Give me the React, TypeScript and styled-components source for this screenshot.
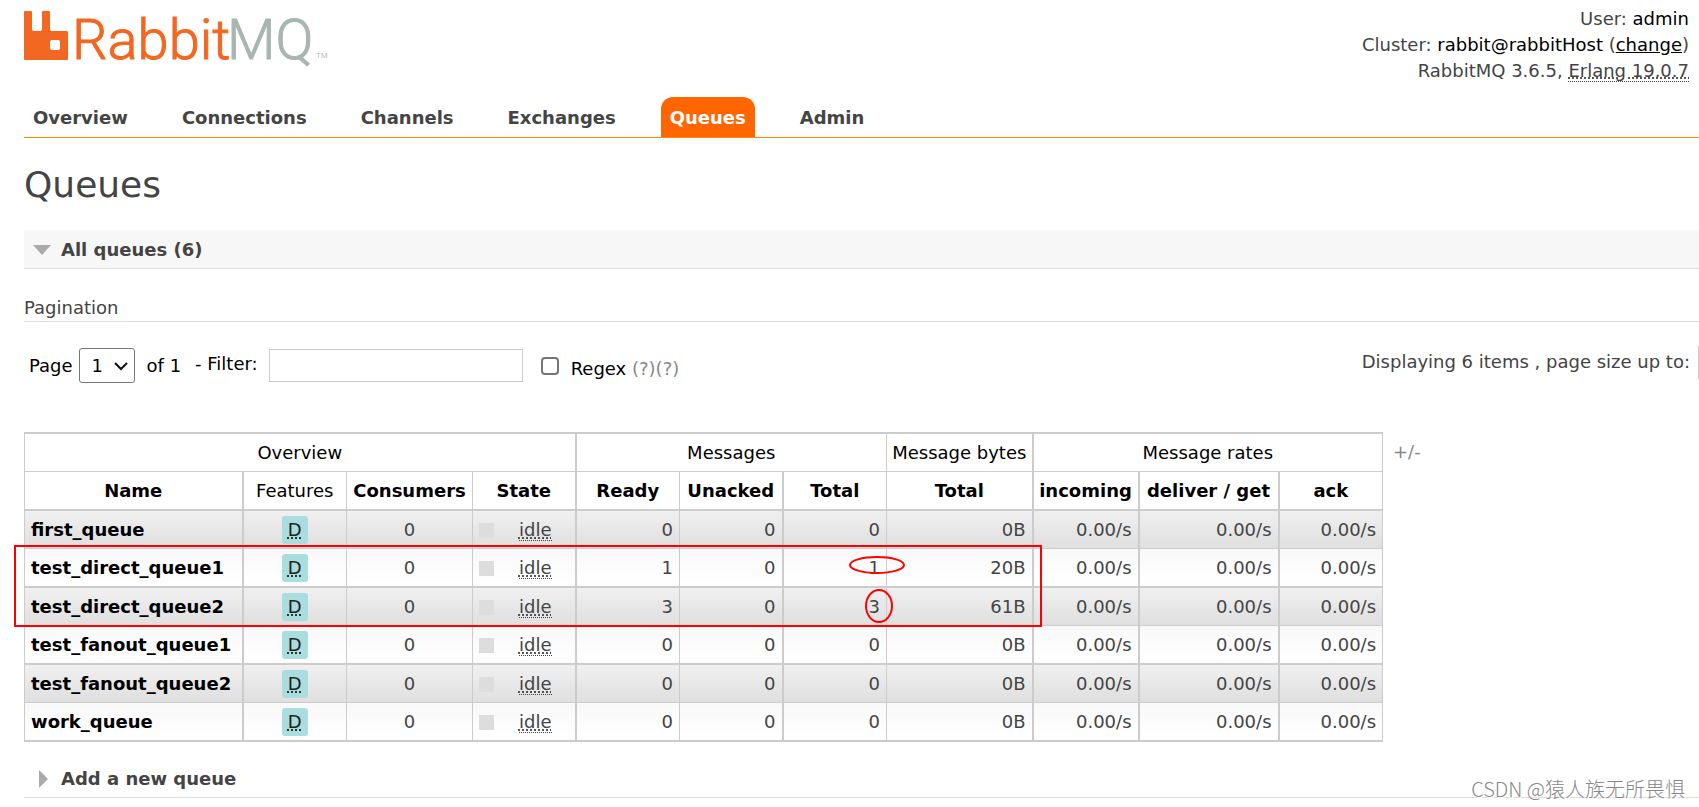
import React from 'react';
import styled, { createGlobalStyle, css } from 'styled-components';

const GlobalStyle = createGlobalStyle`
  *, *::before, *::after { box-sizing: border-box; }
  body {
    margin: 0;
    background: #fff;
    color: #444;
    font: 18px/26px Verdana, "DejaVu Sans", sans-serif;
    overflow-x: hidden;
  }
`;

const Page = styled.div`
  position: relative;
  min-height: 100vh;
  padding-left: 24px;
  overflow: hidden;
`;

const Header = styled.header`
  display: flex;
  justify-content: space-between;
  height: 97px;
  padding: 6px 10px 0 0;
`;

const LogoLink = styled.a`
  display: block;
  svg { display: block; overflow: visible; }
`;

const LogoText = styled.text`
  font-family: Roboto, sans-serif;
  font-size: 56px;
  font-weight: 300;
  stroke-width: 1px;
`;

const Session = styled.div`
  text-align: right;
  white-space: nowrap;
`;

const Strong = styled.span`
  color: #000;
`;

const PlainLink = styled.a`
  color: #000;
`;

const Abbr = styled.abbr`
  text-decoration: underline dotted;
  border-bottom: 1px dotted #444;
`;

const Nav = styled.nav`
  display: flex;
  gap: 36px;
  border-bottom: 1px solid #f80;
`;

const Tab = styled.a<{ $active?: boolean }>`
  padding: 8px 9px 6px;
  border-radius: 12px 12px 0 0;
  font-weight: bold;
  text-decoration: none;
  color: ${p => (p.$active ? '#fff' : '#444')};
  background: ${p => (p.$active ? '#f60' : 'transparent')};
`;

const Title = styled.h1`
  margin: 25px 0 23px;
  font-size: 36px;
  line-height: 44px;
  font-weight: normal;
`;

const SectionToggle = styled.button<{ $open?: boolean }>`
  display: flex;
  align-items: center;
  width: 100%;
  height: 39px;
  padding: 2px 0 0 9px;
  border: 0;
  border-bottom: 1px solid #ddd;
  background: ${p => (p.$open ? '#f7f7f7' : '#fff')};
  color: #444;
  font: bold 18px/26px Verdana, "DejaVu Sans", sans-serif;
  text-align: left;
  svg { flex: none; width: 18px; margin-right: 10px; }
`;

const SubTitle = styled.h3`
  margin: 26px 0 24px;
  border-bottom: 1px solid #ddd;
  font-size: 18px;
  line-height: 26px;
  font-weight: normal;
`;

const Filters = styled.form`
  display: flex;
  justify-content: space-between;
  align-items: flex-start;
  height: 86px;
  padding-left: 5px;
  color: #000;
`;

const FilterGroup = styled.div`
  display: flex;
  align-items: center;
  height: 39px;
  white-space: nowrap;
`;

const SelectBox = styled.span`
  position: relative;
  margin: 0 12px 0 6px;
  svg { position: absolute; right: 7px; top: 14px; pointer-events: none; }
`;

const PageSelect = styled.select`
  display: block;
  appearance: none;
  width: 56px;
  height: 35px;
  padding: 0 0 0 12px;
  border: 1px solid #767676;
  border-radius: 3px;
  background: #fff;
  color: #000;
  font: inherit;
`;

const FilterLabel = styled.label`
  margin-left: 14px;
  padding-bottom: 4px;
`;

const TextInput = styled.input`
  width: 254px;
  height: 33px;
  margin: 0 18px 0 11px;
  border: 1px solid #ccc;
  background: #fff;
  font: inherit;
`;

const Check = styled.input`
  appearance: none;
  width: 18px;
  height: 18px;
  margin: 0 12px 0 0;
  border: 2px solid #767676;
  border-radius: 4px;
  background: #fff;
`;

const RegexLabel = styled.label`
  padding-top: 6px;
`;

const Help = styled.a`
  padding-top: 6px;
  color: #888;
  text-decoration: none;
`;

const SizeLabel = styled.label`
  display: flex;
  align-items: flex-start;
  margin-right: -63px;
  color: #444;
  line-height: 32px;
  white-space: nowrap;
`;

const SizeInput = styled.input`
  width: 64px;
  height: 33px;
  margin-left: 8px;
  border: 1px solid #ccc;
  font: inherit;
`;

const TableArea = styled.div`
  position: relative;
  display: flex;
  align-items: flex-start;
`;

const Table = styled.table`
  flex: none;
  width: 1358px;
  table-layout: fixed;
  border-collapse: collapse;
  border: 1px solid #ccc;
  border-top-width: 2px;
`;

const Col = styled.col<{ $w: number }>`
  width: ${p => p.$w}px;
`;

const edge = css<{ $thick?: boolean }>`
  border-right: ${p => (p.$thick ? 2 : 1)}px solid #ccc;
`;

const Head = styled.th<{ $thick?: boolean; $light?: boolean }>`
  ${edge}
  padding: 1px 0 0;
  color: #000;
  font-weight: ${p => (p.$light ? 'normal' : 'bold')};
  white-space: nowrap;
`;

const GroupRow = styled.tr`
  height: 38px;
  border-bottom: 1px solid #ccc;
`;

const HeadRow = styled.tr`
  height: 39px;
  border-bottom: 2px solid #ccc;
`;

const Cell = styled.td<{ $thick?: boolean; $align?: string }>`
  ${edge}
  padding: 2px 6px 0;
  text-align: ${p => p.$align ?? 'right'};
  white-space: nowrap;
`;

const Row = styled.tr<{ $alt: boolean }>`
  height: ${p => (p.$alt ? 38 : 39)}px;
  border-bottom: ${p => (p.$alt ? 1 : 2)}px solid #ccc;
  & > td {
    background: ${p => (p.$alt ? 'linear-gradient(#f0f0f0, #dfdfdf)' : 'linear-gradient(#f8f8f8, #fff)')};
  }
`;

const QueueLink = styled.a`
  color: #000;
  font-weight: bold;
  text-decoration: none;
`;

const Feature = styled.abbr`
  display: inline-block;
  padding: 1px 6px;
  border-radius: 3px;
  background: #add;
  color: #222;
  text-decoration: underline dotted;
`;

const State = styled.div`
  display: flex;
  align-items: center;
`;

const StateMark = styled.span`
  width: 15px;
  height: 15px;
  margin-right: 8px;
  background: #ddd;
`;

const StateText = styled.span`
  flex: 1;
  text-align: center;
`;

const ColumnsLink = styled.a`
  margin-left: 10px;
  padding-top: 7px;
  color: #888;
  text-decoration: none;
`;

const Marks = styled.svg`
  position: absolute;
  left: -12px;
  top: 110px;
  pointer-events: none;
`;

const Gap = styled.div`
  height: 17px;
`;

const Watermark = styled.div`
  position: absolute;
  right: 14px;
  top: 776px;
  color: #888;
  font: 300 20px/26px "Noto Sans CJK SC", sans-serif;
  text-shadow: 1px 1px 0 #fff;
`;

const tabs = ['Overview', 'Connections', 'Channels', 'Exchanges', 'Queues', 'Admin'];

const queues = [
  { name: 'first_queue', ready: 0, bytes: '0B' },
  { name: 'test_direct_queue1', ready: 1, bytes: '20B' },
  { name: 'test_direct_queue2', ready: 3, bytes: '61B' },
  { name: 'test_fanout_queue1', ready: 0, bytes: '0B' },
  { name: 'test_fanout_queue2', ready: 0, bytes: '0B' },
  { name: 'work_queue', ready: 0, bytes: '0B' },
];

const columnWidths = [218, 104, 126, 103, 104, 103, 104, 146, 106, 140, 104];

const Logo = () => (
  <svg width="320" height="64" viewBox="0 0 320 64" role="img" aria-label="RabbitMQ">
    <path
      fill="#f26722"
      fillRule="evenodd"
      d="M0 6Q0 5 1 5H7Q8 5 8 6V23Q8 25 10 25H16Q18 25 18 23V6Q18 5 19 5H25Q26 5 26 6V23Q26 25 28 25H43Q44 25 44 27V53Q44 54 43 54H1Q0 54 0 53ZM28 34Q26 34 26 36V42Q26 44 28 44H34Q36 44 36 42V36Q36 34 34 34Z"
    />
    <LogoText x="48" y="53" fill="#f26722" stroke="#f26722">Rabbit</LogoText>
    <LogoText x="203" y="53" fill="#a9b6b0" stroke="#a9b6b0">MQ</LogoText>
    <text x="292" y="52" fill="#bbb" fontSize="8" fontFamily="Liberation Sans, sans-serif">TM</text>
  </svg>
);

export default function App() {
  return (
    <>
      <GlobalStyle />
      <Page>
        <Header>
          <LogoLink href="#/"><Logo /></LogoLink>
          <Session>
            <div>User: <Strong>admin</Strong></div>
            <div>Cluster: <Strong>rabbit@rabbitHost</Strong> (<PlainLink href="#/cluster-name">change</PlainLink>)</div>
            <div>RabbitMQ 3.6.5, <Abbr title="Erlang/OTP 19">Erlang 19.0.7</Abbr></div>
          </Session>
        </Header>
        <Nav>
          {tabs.map(t => (
            <Tab key={t} href={`#/${t.toLowerCase()}`} $active={t === 'Queues'}>{t}</Tab>
          ))}
        </Nav>
        <main>
          <Title>Queues</Title>
          <SectionToggle type="button" $open>
            <svg height="10" viewBox="0 0 18 10"><path d="M0 0H18L9 10Z" fill="#aaa" /></svg>
            All queues (6)
          </SectionToggle>
          <SubTitle>Pagination</SubTitle>
          <Filters onSubmit={e => e.preventDefault()}>
            <FilterGroup>
              <label htmlFor="page">Page</label>
              <SelectBox>
                <PageSelect id="page" defaultValue="1"><option>1</option></PageSelect>
                <svg width="14" height="9" viewBox="0 0 14 9">
                  <path d="M1 1L7 7L13 1" fill="none" stroke="#111" strokeWidth="2" />
                </svg>
              </SelectBox>
              <span>of 1</span>
              <FilterLabel htmlFor="filter">- Filter:</FilterLabel>
              <TextInput id="filter" type="text" />
              <Check id="regex" type="checkbox" />
              <RegexLabel htmlFor="regex">Regex&nbsp;</RegexLabel>
              <Help href="#regex-help">(?)</Help>
              <Help href="#filter-help">(?)</Help>
            </FilterGroup>
            <SizeLabel>
              Displaying 6 items , page size up to:
              <SizeInput type="text" />
            </SizeLabel>
          </Filters>
          <TableArea>
            <Table>
              <colgroup>{columnWidths.map((w, i) => <Col key={i} $w={w} />)}</colgroup>
              <thead>
                <GroupRow>
                  <Head colSpan={4} $thick $light>Overview</Head>
                  <Head colSpan={3} $light>Messages</Head>
                  <Head $thick $light>Message bytes</Head>
                  <Head colSpan={3} $light>Message rates</Head>
                </GroupRow>
                <HeadRow>
                  <Head $thick>Name</Head>
                  <Head $light>Features</Head>
                  <Head>Consumers</Head>
                  <Head $thick>State</Head>
                  <Head>Ready</Head>
                  <Head $thick>Unacked</Head>
                  <Head>Total</Head>
                  <Head $thick>Total</Head>
                  <Head $thick>incoming</Head>
                  <Head $thick>deliver / get</Head>
                  <Head>ack</Head>
                </HeadRow>
              </thead>
              <tbody>
                {queues.map((q, i) => (
                  <Row key={q.name} $alt={i % 2 === 0}>
                    <Cell $thick $align="left"><QueueLink href={`#/queues/${q.name}`}>{q.name}</QueueLink></Cell>
                    <Cell $align="center"><Feature title="durable: true">D</Feature></Cell>
                    <Cell $align="center">0</Cell>
                    <Cell $thick>
                      <State><StateMark /><StateText><Abbr title="Idle">idle</Abbr></StateText></State>
                    </Cell>
                    <Cell>{q.ready}</Cell>
                    <Cell $thick>0</Cell>
                    <Cell>{q.ready}</Cell>
                    <Cell $thick>{q.bytes}</Cell>
                    <Cell $thick>0.00/s</Cell>
                    <Cell $thick>0.00/s</Cell>
                    <Cell>0.00/s</Cell>
                  </Row>
                ))}
              </tbody>
            </Table>
            <ColumnsLink href="#columns">+/-</ColumnsLink>
            <Marks width="1032" height="90" fill="none" stroke="#f00" strokeWidth="2">
              <rect x="3" y="4" width="1026" height="80" />
              <ellipse cx="865" cy="23" rx="27" ry="8" />
              <ellipse cx="867" cy="64" rx="13" ry="16" />
            </Marks>
          </TableArea>
          <Gap />
          <SectionToggle type="button">
            <svg height="18" viewBox="0 0 18 18"><path d="M6 0L15 9L6 18Z" fill="#aaa" /></svg>
            Add a new queue
          </SectionToggle>
        </main>
        <Watermark>CSDN @猿人族无所畏惧</Watermark>
      </Page>
    </>
  );
}
